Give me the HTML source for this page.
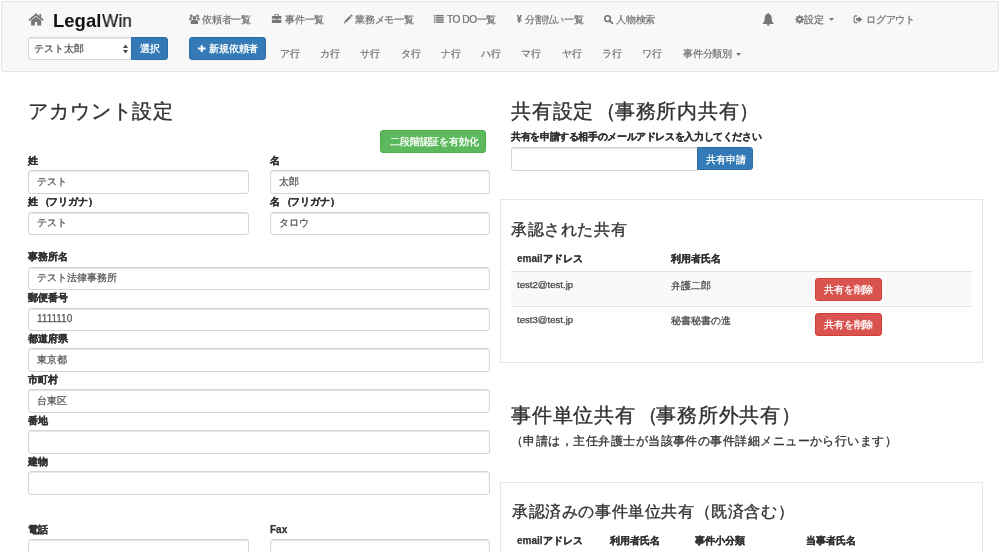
<!DOCTYPE html>
<html lang="ja">
<head>
<meta charset="utf-8">
<title>アカウント設定</title>
<style>
html,body{margin:0;padding:0;background:#fff;}
body{width:1000px;height:552px;position:relative;overflow:hidden;font-family:"Liberation Sans",sans-serif;color:#333;}
.t{position:absolute;white-space:nowrap;line-height:1;will-change:transform;}
.nav{position:absolute;left:1px;top:1px;width:996px;height:69px;background:#f8f8f8;border:1px solid #e4e4e4;border-radius:3px;}
.nl{font-size:9.8px;letter-spacing:-0.2px;color:#737373;-webkit-text-stroke:0.22px #737373;}
.ico{position:absolute;}
.inp{position:absolute;box-sizing:border-box;height:23.5px;border:1px solid #d4d4d4;border-radius:3px;background:#fff;box-shadow:inset 0 1px 1px rgba(0,0,0,.1);}
.lbl{font-size:10px;font-weight:bold;color:#333;-webkit-text-stroke:0.25px #333;}
.val{font-size:10px;color:#555;-webkit-text-stroke:0.25px #555;}
.btn{position:absolute;box-sizing:border-box;border-radius:3px;}
.blue{background:#337ab7;border:1px solid #2e6da4;}
.green{background:#5cb85c;border:1px solid #4cae4c;}
.red{background:#d9534f;border:1px solid #d43f3a;}
.wt{color:#fff;font-size:9.8px;-webkit-text-stroke:0.3px #fff;letter-spacing:-0.15px;}
.h2{font-size:20px;color:#333;-webkit-text-stroke:0.4px #333;letter-spacing:0.75px;}
.h3{font-size:16px;color:#333;-webkit-text-stroke:0.35px #333;letter-spacing:0.6px;}
.panel{position:absolute;box-sizing:border-box;border:1px solid #e6e6e6;background:#fff;}
</style>
</head>
<body>
<!-- NAVBAR -->
<div class="nav"></div>
<!-- home icon -->
<svg class="ico" style="left:27px;top:12px" width="18" height="15" viewBox="27 12 18 15"><path d="M29.2 20.3 L36.1 14.5 L43 20.3" fill="none" stroke="#777" stroke-width="1.8"/><rect x="39.4" y="14" width="1.8" height="3.6" fill="#777"/><path d="M31.1 25.6 V20.6 L36.1 16.6 L41.2 20.6 V25.6 H37.2 V22.1 H35 V25.6 Z" fill="#777"/></svg>
<div class="t" style="left:53px;top:11.5px;font-size:18.5px;font-weight:bold;color:#111">Legal</div>
<div class="t" style="left:101.5px;top:11.5px;font-size:18.5px;color:#1a1a1a;transform:scaleX(0.94);transform-origin:0 0;-webkit-text-stroke:0.2px #1a1a1a">Win</div>

<!-- row1 links -->
<svg class="ico" style="left:188px;top:13px" width="13" height="12" viewBox="188 13 13 12"><g fill="#777"><circle cx="191.3" cy="16" r="1.4"/><circle cx="197.5" cy="16" r="1.4"/><path d="M189 20.2 C189 18.5 189.5 17.6 190.7 17.6 C191.4 17.6 191.9 17.8 192.2 18.2 C191.5 18.7 191.1 19.4 191 20.2 Z"/><path d="M199.8 20.2 C199.8 18.5 199.3 17.6 198.1 17.6 C197.4 17.6 196.9 17.8 196.6 18.2 C197.3 18.7 197.7 19.4 197.8 20.2 Z"/><circle cx="194.4" cy="17.9" r="1.85"/><path d="M190.8 24 V21.8 C190.8 20.6 191.6 20 192.7 20 H196.1 C197.2 20 198 20.6 198 21.8 V24 Z"/></g></svg>
<div class="t nl" style="left:202px;top:14.5px">依頼者一覧</div>
<svg class="ico" style="left:271px;top:13px" width="12" height="11" viewBox="271 13 12 11"><g fill="#777"><path d="M274.3 16 V14.9 C274.3 14.5 274.6 14.2 275 14.2 H278.2 C278.6 14.2 278.9 14.5 278.9 14.9 V16 H278 V15.1 H275.2 V16 Z"/><path d="M272.6 15.9 H280.7 C281.1 15.9 281.4 16.2 281.4 16.6 V18.7 H271.9 V16.6 C271.9 16.2 272.2 15.9 272.6 15.9 Z"/><path d="M271.9 19.8 H281.4 V22.3 C281.4 22.7 281.1 22.9 280.7 22.9 H272.6 C272.2 22.9 271.9 22.7 271.9 22.3 Z"/><rect x="275.9" y="18.4" width="1.5" height="1.7"/></g></svg>
<div class="t nl" style="left:284.5px;top:14.5px">事件一覧</div>
<svg class="ico" style="left:343px;top:14px" width="10" height="11" viewBox="343 14 10 11"><g fill="#777"><path d="M349.6 15.9 L351.2 17.5 L346.1 22.6 L344.5 21 Z"/><path d="M350.1 15.4 L350.8 14.7 C351.1 14.4 351.5 14.4 351.8 14.7 L352.4 15.3 C352.7 15.6 352.7 16 352.4 16.3 L351.7 17 Z"/><path d="M344.1 21.5 L345.6 23 L343.8 23.8 Z"/></g></svg>
<div class="t nl" style="left:355px;top:14.5px">業務メモ一覧</div>
<svg class="ico" style="left:433px;top:14px" width="12" height="10" viewBox="433 14 12 10"><g fill="#777"><rect x="433.9" y="14.9" width="1.4" height="1.5"/><rect x="435.9" y="14.9" width="7.8" height="1.5"/><rect x="433.9" y="17" width="1.4" height="1.5"/><rect x="435.9" y="17" width="7.8" height="1.5"/><rect x="433.9" y="19.2" width="1.4" height="1.5"/><rect x="435.9" y="19.2" width="7.8" height="1.5"/><rect x="433.9" y="21.4" width="1.4" height="1.5"/><rect x="435.9" y="21.4" width="7.8" height="1.5"/></g></svg>
<div class="t nl" style="left:447px;top:14.5px"><span style="font-size:10.2px;letter-spacing:-0.5px">TO DO</span>一覧</div>
<svg class="ico" style="left:516px;top:14px" width="7" height="10" viewBox="516 14 7 10"><path d="M516.6 14.9 H518.3 L519.3 17.4 L520.3 14.9 H522 L520.3 18.6 H521.5 V19.6 H520.1 V20.2 H521.5 V21.2 H520.1 V22.8 H518.5 V21.2 H517.1 V20.2 H518.5 V19.6 H517.1 V18.6 H518.3 Z" fill="#777"/></svg>
<div class="t nl" style="left:524.5px;top:14.5px">分割払い一覧</div>
<svg class="ico" style="left:603px;top:14px" width="11" height="11" viewBox="603 14 11 11"><circle cx="607.6" cy="18.6" r="2.85" fill="none" stroke="#777" stroke-width="1.6"/><path d="M609.8 20.8 L612.4 23.3" stroke="#777" stroke-width="1.8" stroke-linecap="round"/></svg>
<div class="t nl" style="left:616px;top:14.5px">人物検索</div>
<svg class="ico" style="left:761px;top:12px" width="15" height="15" viewBox="761 12 15 15"><path d="M768.2 13.1 C768.8 13.1 769.1 13.5 769.1 14.1 C771 14.6 771.7 16.3 771.7 18.6 C771.7 21.3 772.6 22.8 774.2 23.9 H762.2 C763.8 22.8 764.7 21.3 764.7 18.6 C764.7 16.3 765.4 14.6 767.3 14.1 C767.3 13.5 767.6 13.1 768.2 13.1 Z M766.7 24.3 H769.7 C769.7 25.2 769 25.9 768.2 25.9 C767.4 25.9 766.7 25.2 766.7 24.3 Z" fill="#777"/></svg>
<svg class="ico" style="left:795px;top:14px" width="10" height="11" viewBox="795 14 10 11"><g fill="#777"><circle cx="799.6" cy="19.4" r="3.2"/><rect x="798.85" y="15.05" width="1.5" height="8.7" rx="0.3" transform="rotate(0 799.6 19.4)"/><rect x="798.85" y="15.05" width="1.5" height="8.7" rx="0.3" transform="rotate(45 799.6 19.4)"/><rect x="798.85" y="15.05" width="1.5" height="8.7" rx="0.3" transform="rotate(90 799.6 19.4)"/><rect x="798.85" y="15.05" width="1.5" height="8.7" rx="0.3" transform="rotate(135 799.6 19.4)"/></g><circle cx="799.6" cy="19.4" r="1.35" fill="#f8f8f8"/></svg>
<div class="t nl" style="left:804px;top:14.5px">設定</div>
<svg class="ico" style="left:829px;top:18px" width="5" height="3" viewBox="0 0 5 3"><path d="M0 0 H5 L2.5 3 Z" fill="#777"/></svg>
<svg class="ico" style="left:853px;top:15px" width="10" height="9" viewBox="853 15 10 9"><path d="M857.1 15.9 H855.1 C854.5 15.9 854.2 16.3 854.2 16.9 V21.7 C854.2 22.3 854.5 22.6 855.1 22.6 H857.1" fill="none" stroke="#777" stroke-width="1.1"/><path d="M856.2 18.1 H858.6 V16.2 L862.3 19.4 L858.6 22.7 V20.8 H856.2 Z" fill="#777"/></svg>
<div class="t nl" style="left:866px;top:14.5px">ログアウト</div>

<!-- row2 -->
<div class="inp" style="left:28px;top:37px;width:104px;height:23.3px"></div>
<div class="t val" style="left:34.3px;top:43.7px">テスト太郎</div>
<svg class="ico" style="left:122.5px;top:43.7px" width="5" height="10" viewBox="0 0 5 10"><path d="M0 4 L2.5 0.5 L5 4 Z M0 6 H5 L2.5 9.5 Z" fill="#444"/></svg>
<div class="btn blue" style="left:130.6px;top:36.7px;width:37.4px;height:23.3px;border-radius:0 3px 3px 0"></div>
<div class="t wt" style="left:139.5px;top:44px">選択</div>

<div class="btn blue" style="left:188.8px;top:36.7px;width:77.2px;height:23.3px"></div>
<svg class="ico" style="left:197px;top:44px" width="10" height="10" viewBox="197 44 10 10"><path d="M200.7 45.2 H202.8 V47.6 H205.6 V49.6 H202.8 V52 H200.7 V49.6 H197.9 V47.6 H200.7 Z" fill="#fff"/></svg>
<div class="t wt" style="left:208.5px;top:44px">新規依頼者</div>

<div class="t nl" style="left:279.7px;top:49px">ア行</div>
<div class="t nl" style="left:320.0px;top:49px">カ行</div>
<div class="t nl" style="left:360.2px;top:49px">サ行</div>
<div class="t nl" style="left:400.5px;top:49px">タ行</div>
<div class="t nl" style="left:440.7px;top:49px">ナ行</div>
<div class="t nl" style="left:481.0px;top:49px">ハ行</div>
<div class="t nl" style="left:521.2px;top:49px">マ行</div>
<div class="t nl" style="left:561.5px;top:49px">ヤ行</div>
<div class="t nl" style="left:601.7px;top:49px">ラ行</div>
<div class="t nl" style="left:642.0px;top:49px">ワ行</div>
<div class="t nl" style="left:682.8px;top:49px">事件分類別</div>
<svg class="ico" style="left:735.5px;top:53px" width="5" height="3" viewBox="0 0 5 3"><path d="M0 0 H5 L2.5 3 Z" fill="#777"/></svg>

<!-- LEFT COLUMN -->
<div class="t h2" style="left:27.6px;top:100.8px;letter-spacing:0.9px">アカウント設定</div>
<div class="btn green" style="left:380.4px;top:129.9px;width:105.5px;height:23.3px"></div>
<div class="t wt" style="left:389.5px;top:137px">二段階認証を有効化</div>

<div class="t lbl" style="left:28px;top:155.5px">姓</div>
<div class="t lbl" style="left:269.6px;top:155.5px">名</div>
<div class="inp" style="left:28px;top:170.4px;width:220.5px"></div>
<div class="inp" style="left:269.6px;top:170.4px;width:220.5px"></div>
<div class="t val" style="left:37px;top:177.2px">テスト</div>
<div class="t val" style="left:278.5px;top:177.2px">太郎</div>

<div class="t lbl" style="left:28px;top:196.5px">姓<span style="position:relative;left:2.2px">（</span>フリガナ）</div>
<div class="t lbl" style="left:269.6px;top:196.5px">名<span style="position:relative;left:2.2px">（</span>フリガナ）</div>
<div class="inp" style="left:28px;top:211.5px;width:220.5px"></div>
<div class="inp" style="left:269.6px;top:211.5px;width:220.5px"></div>
<div class="t val" style="left:37px;top:218.2px">テスト</div>
<div class="t val" style="left:278.5px;top:218.2px">タロウ</div>

<div class="t lbl" style="left:28px;top:251.5px">事務所名</div>
<div class="inp" style="left:28px;top:266.5px;width:462px"></div>
<div class="t val" style="left:37px;top:273.2px">テスト法律事務所</div>

<div class="t lbl" style="left:28px;top:292.5px">郵便番号</div>
<div class="inp" style="left:28px;top:307.5px;width:462px"></div>
<div class="t val" style="left:37px;top:313.7px">1111110</div>

<div class="t lbl" style="left:28px;top:333.5px">都道府県</div>
<div class="inp" style="left:28px;top:348.4px;width:462px"></div>
<div class="t val" style="left:37px;top:355.2px">東京都</div>

<div class="t lbl" style="left:28px;top:374.5px">市町村</div>
<div class="inp" style="left:28px;top:389.4px;width:462px"></div>
<div class="t val" style="left:37px;top:396.2px">台東区</div>

<div class="t lbl" style="left:28px;top:415.5px">番地</div>
<div class="inp" style="left:28px;top:430.3px;width:462px"></div>

<div class="t lbl" style="left:28px;top:456.5px">建物</div>
<div class="inp" style="left:28px;top:471px;width:462px"></div>

<div class="t lbl" style="left:28px;top:524.5px">電話</div>
<div class="t lbl" style="left:269.6px;top:524.5px">Fax</div>
<div class="inp" style="left:28px;top:539.4px;width:220.5px"></div>
<div class="inp" style="left:269.6px;top:539.4px;width:220.5px"></div>

<!-- RIGHT COLUMN -->
<div class="t h2" style="left:511px;top:100.5px">共有設定<span style="position:relative;left:2.4px">（</span>事務所内共有）</div>
<div class="t lbl" style="left:511px;top:132px;letter-spacing:-0.37px">共有を申請する相手のメールアドレスを入力してください</div>
<div class="inp" style="left:510.5px;top:147px;width:187px;border-radius:3px 0 0 3px"></div>
<div class="btn blue" style="left:696.7px;top:147px;width:56.5px;height:23.4px;border-radius:0 3px 3px 0"></div>
<div class="t wt" style="left:705.8px;top:154.6px">共有申請</div>

<div class="panel" style="left:500px;top:199px;width:483px;height:164px"></div>
<div class="t h3" style="left:511px;top:221.8px">承認された共有</div>
<div class="t lbl" style="left:516.5px;top:253.5px">emailアドレス</div>
<div class="t lbl" style="left:671.2px;top:253.5px">利用者氏名</div>
<div style="position:absolute;left:511px;top:270.5px;width:460.5px;height:1.5px;background:#ddd"></div>
<div style="position:absolute;left:511px;top:272px;width:460.5px;height:34.2px;background:#f9f9f9"></div>
<div style="position:absolute;left:511px;top:306.2px;width:460.5px;height:1px;background:#e3e3e3"></div>
<div class="t val" style="left:516.5px;top:280.3px;color:#333;font-size:9.6px">test2@test.jp</div>
<div class="t val" style="left:671.2px;top:280.5px;color:#333">弁護二郎</div>
<div class="btn red" style="left:815px;top:277.5px;width:67px;height:23.3px"></div>
<div class="t wt" style="left:824.3px;top:284.5px">共有を削除</div>
<div class="t val" style="left:516.5px;top:315.3px;color:#333;font-size:9.6px">test3@test.jp</div>
<div class="t val" style="left:671.2px;top:315.5px;color:#333">秘書秘書の進</div>
<div class="btn red" style="left:815px;top:313px;width:67px;height:23.3px"></div>
<div class="t wt" style="left:824.3px;top:320px">共有を削除</div>

<div class="t h2" style="left:511px;top:405px">事件単位共有<span style="position:relative;left:2.4px">（</span>事務所外共有）</div>
<div class="t" style="left:511px;top:435px;font-size:12px;letter-spacing:0.46px;color:#333;-webkit-text-stroke:0.3px #333">（申請は，主任弁護士が当該事件の事件詳細メニューから行います）</div>

<div class="panel" style="left:500px;top:482px;width:483px;height:80px"></div>
<div class="t h3" style="left:511.5px;top:504px">承認済みの事件単位共有（既済含む）</div>
<div class="t lbl" style="left:517px;top:536px">emailアドレス</div>
<div class="t lbl" style="left:609.5px;top:536px">利用者氏名</div>
<div class="t lbl" style="left:695px;top:536px">事件小分類</div>
<div class="t lbl" style="left:806.2px;top:536px">当事者氏名</div>
</body>
</html>
